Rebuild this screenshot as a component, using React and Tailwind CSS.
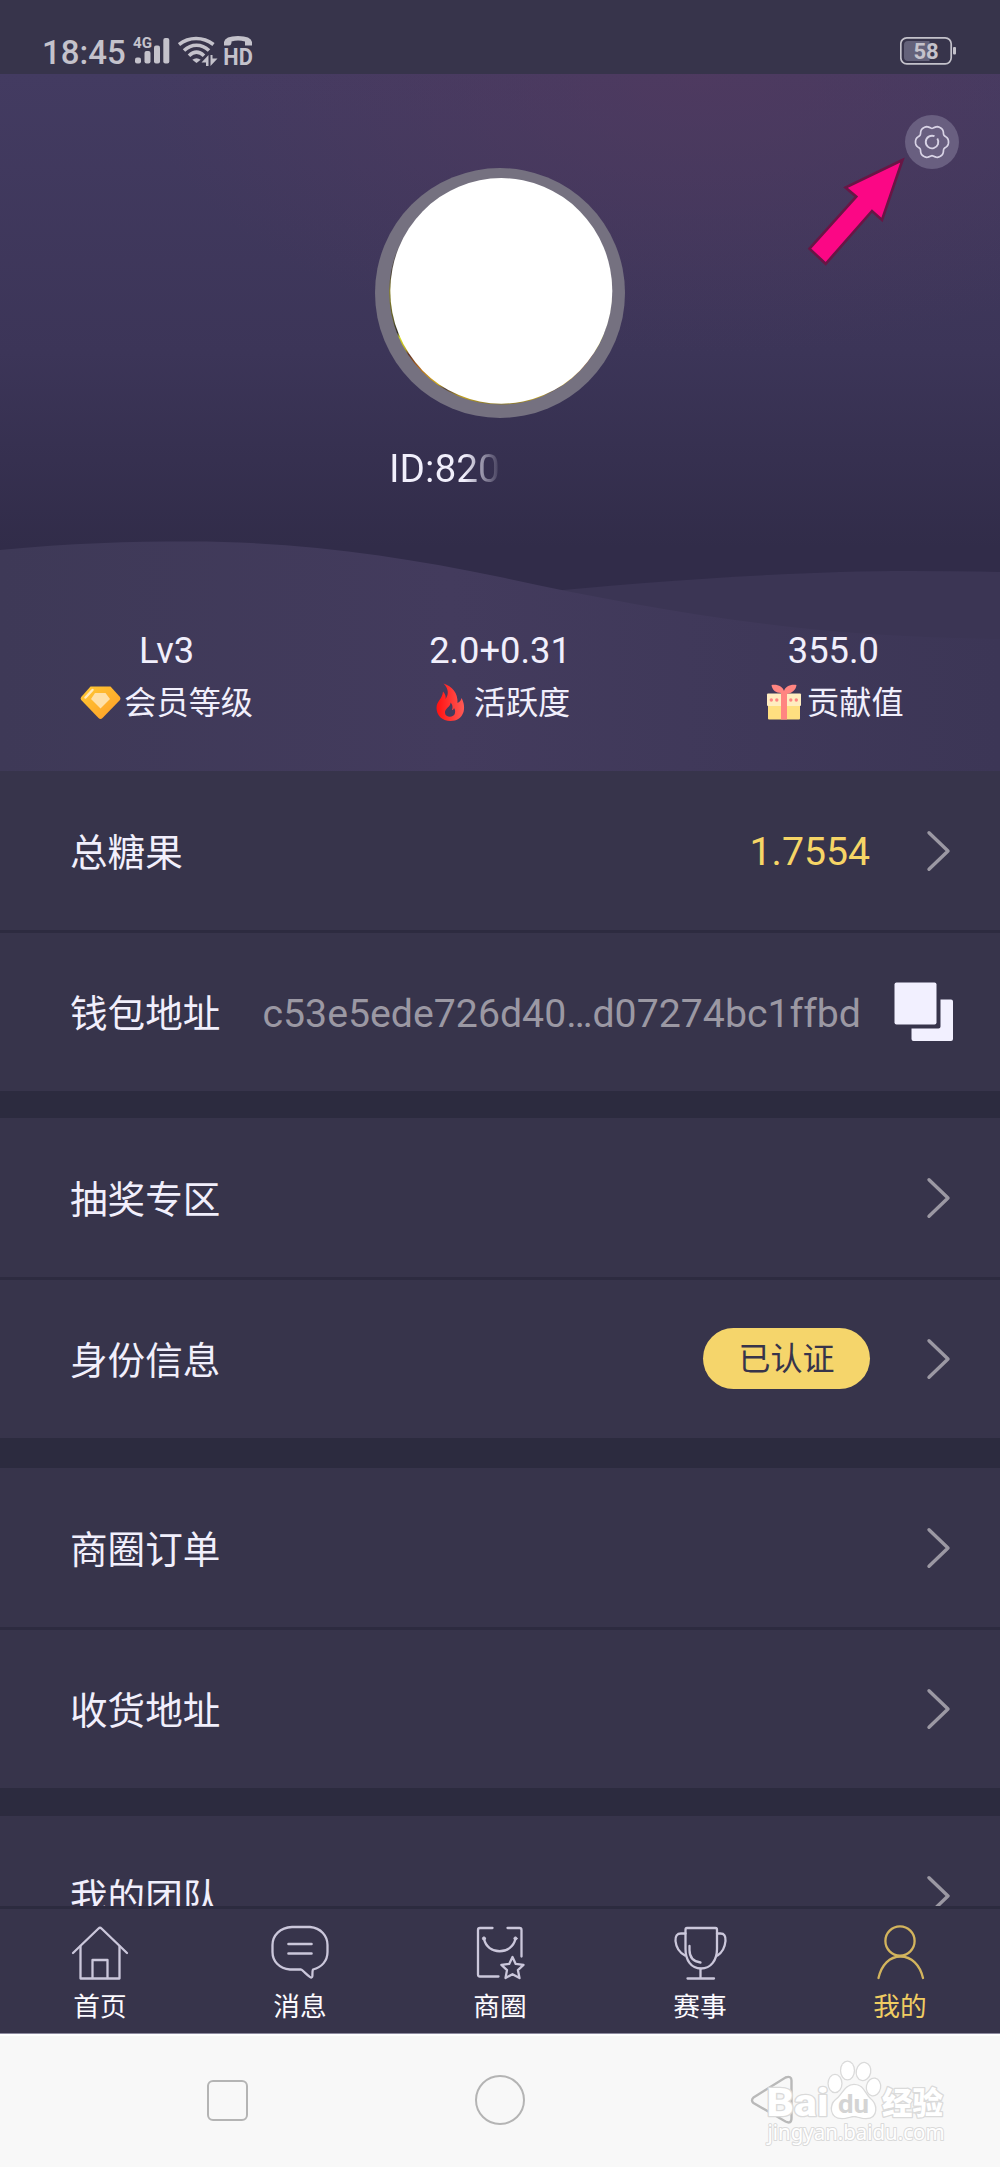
import clsx from "clsx";

const gearPath =
  Array.from({ length: 73 }, (_, i) => {
    const a = (i * 5 * Math.PI) / 180;
    const r = 15.4 + 1.4 * Math.cos(6 * a) - 0.3 * Math.cos(12 * a);
    return `${i === 0 ? "M" : "L"}${(27 + r * Math.cos(a)).toFixed(2)} ${(27 + r * Math.sin(a)).toFixed(2)}`;
  }).join(" ") + "Z";

function StatusBar() {
  return (
    <div className="flex h-[74px] items-start justify-between bg-[#37344b] pt-9 pr-[43px] pl-[42px] text-[#c4c2cb]">
      <div className="flex items-start">
        <span className="w-[91px] pt-px text-[33px] leading-[32px] font-medium">18:45</span>
        <svg className="h-[30px] w-[37px] overflow-visible" viewBox="133 36 37 30" fill="currentColor">
          <text x="133" y="48.3" fontSize="14" fontWeight="700" textLength="19" lengthAdjust="spacingAndGlyphs">4G</text>
          <rect x="135" y="57.5" width="6" height="6" rx="2" />
          <rect x="144.5" y="51" width="6" height="12.5" rx="2" />
          <rect x="154" y="45.5" width="6" height="18" rx="2" />
          <rect x="163.3" y="38" width="6" height="25.5" rx="2" />
        </svg>
        <svg className="ml-2 h-[30px] w-[40px]" viewBox="178 36 40 30" fill="none" stroke="currentColor" strokeWidth="3.6">
          <path d="M179 44.5C189 36.5 203 36.5 213.5 44.5" />
          <path d="M184 50.5C191.500 43.5 201.500 43.500 209 50.5" />
          <path d="M189 55.8C194 51 199 51 204 55.8" />
          <path d="M192.300 59.800Q196.500 56.500 200.700 59.800L196.500 63Z" fill="currentColor" stroke="none" />
          <path d="M208.500 55V66H206V62.500H201.500ZM210.500 66V55H212.500V58.500H217.500Z" fill="currentColor" stroke="none" />
        </svg>
        <svg className="ml-[6px] h-[30px] w-[29px] overflow-visible" viewBox="224 36 29 30" fill="currentColor">
          <path d="M224 45.500V42Q225 36 238 36T252 42V45.500H245V41.500Q238 39.500 231.500 41.500V43Q231 45.500 229 45.500Z" />
          <text x="223.300" y="64.800" fontSize="23.500" fontWeight="700" textLength="29.500" lengthAdjust="spacingAndGlyphs">HD</text>
        </svg>
      </div>
      <svg className="h-[30px] w-[57px]" viewBox="900 36 57 30" fill="currentColor">
        <rect x="900.800" y="37.800" width="50.400" height="26" rx="6" fill="none" stroke="currentColor" strokeWidth="1.700" />
        <path d="M908 41H929.500V61H908Q904 61 904 57V45Q904 41 908 41Z" fill="#64627a" />
        <text x="926" y="59.200" fontSize="22" fontWeight="700" textAnchor="middle">58</text>
        <rect x="953" y="47" width="3" height="7.500" rx="1" />
      </svg>
    </div>
  );
}

function GemIcon() {
  return (
    <svg className="size-[41px]" viewBox="0 0 41 41">
      <defs>
        <linearGradient id="gem" x1="0" y1="0" x2="1" y2="1">
          <stop offset="0" stopColor="#ffc933" />
          <stop offset="1" stopColor="#ff9d28" />
        </linearGradient>
      </defs>
      <path d="M10.500 3.500H30.500L40 14Q41 15.500 40 17L22.500 35Q20.500 36.800 18.500 35L1.200 17Q0 15.500 1.200 14Z" fill="url(#gem)" />
      <path d="M15 10H25.500L30 16L20.500 25.500L11 16Z" fill="#ffe0a8" />
      <path d="M5.500 14.500L12.500 7" stroke="#ffe9bd" strokeWidth="2.500" strokeLinecap="round" />
    </svg>
  );
}

function FlameIcon() {
  return (
    <svg className="size-[41px]" viewBox="0 0 41 41">
      <defs>
        <linearGradient id="flame" x1="0" y1="0" x2="1" y2="0">
          <stop offset="0" stopColor="#ff1010" />
          <stop offset="1" stopColor="#ff5a55" />
        </linearGradient>
      </defs>
      <path
        fillRule="evenodd"
        fill="url(#flame)"
        d="M13.500 .500C22 3 28 10 27.500 20C30 19 31 17 31.500 15C34.500 20 34.500 26 33.500 29C31.500 35 27 38 20.500 38C12 38 6.500 32 6.500 25C6.500 18 12.500 16 13 8.500C15.500 11 16 14 15.500 16C19.500 11 18 5 13.500 .500ZM20.500 19.500C21 24 14.500 25 15 30C15.500 35 24 35 25 30C25.500 27 24.500 26 24 25C23.500 26.500 23 27 22 27C23 24 22.500 21 20.500 19.500Z"
      />
    </svg>
  );
}

function GiftIcon() {
  return (
    <svg className="size-[41px]" viewBox="0 0 41 41">
      <path d="M5 20H37V35.500Q37 36.500 36 36.500H6Q5 36.500 5 35.500Z" fill="#ffdf80" />
      <rect x="4" y="10.500" width="34" height="12.500" rx="1" fill="#ffedc0" />
      <path d="M18 10C13 10 9 7 8.500 2C15 1 20 4 21 8C22 4 27 1 33.500 2C33 7 29 10 24 11V36.500H18Z" fill="#ff8581" />
      <g fill="#ff8581">
        <circle cx="8.300" cy="17" r="1.700" />
        <circle cx="13.800" cy="17" r="1.700" />
        <circle cx="27.800" cy="17" r="1.700" />
        <circle cx="33.300" cy="17" r="1.700" />
      </g>
    </svg>
  );
}

const stats = [
  { value: "Lv3", label: "会员等级", Icon: GemIcon },
  { value: "2.0+0.31", label: "活跃度", Icon: FlameIcon },
  { value: "355.0", label: "贡献值", Icon: GiftIcon },
];

function HeaderBackground() {
  return (
    <svg className="absolute inset-0 h-full w-full" viewBox="0 74 1000 697" preserveAspectRatio="none">
      <defs>
        <linearGradient id="sky" x1="0" y1="0" x2="0" y2="1">
          <stop offset="0" stopColor="#433b61" />
          <stop offset=".4" stopColor="#3c3558" />
          <stop offset=".68" stopColor="#312c49" />
        </linearGradient>
        <radialGradient id="glow" gradientUnits="userSpaceOnUse" cx="700" cy="74" r="560" gradientTransform="translate(0 37) scale(1 .5)">
          <stop offset="0" stopColor="#55395f" stopOpacity=".6" />
          <stop offset="1" stopColor="#55395f" stopOpacity="0" />
        </radialGradient>
        <linearGradient id="hill" x1="0" y1="0" x2="1" y2="0">
          <stop offset="0" stopColor="#3e3957" />
          <stop offset=".45" stopColor="#433b5d" />
          <stop offset="1" stopColor="#3c3656" />
        </linearGradient>
      </defs>
      <rect y="74" width="1000" height="697" fill="url(#sky)" />
      <rect y="74" width="1000" height="697" fill="url(#glow)" />
      <path d="M520 594C660 580 800 571 910 571Q960 571 1000 572V771H520Z" fill="#3b3554" />
      <path
        d="M0 550C70 543 130 541.500 190 541.500C300 541.500 400 556 500 577C620 603 740 625 870 634Q930 638 1000 639V771H0Z"
        fill="url(#hill)"
      />
    </svg>
  );
}

function Avatar() {
  return (
    <svg className="size-[250px] shrink-0" viewBox="0 0 250 250">
      <defs>
        <linearGradient id="rim" gradientUnits="userSpaceOnUse" x1="0" y1="70" x2="0" y2="236">
          <stop offset="0" stopColor="#757180" />
          <stop offset=".22" stopColor="#4a4030" />
          <stop offset=".32" stopColor="#8a8426" />
          <stop offset=".5" stopColor="#5c5a2a" />
          <stop offset=".57" stopColor="#2f2a25" />
          <stop offset=".6" stopColor="#d6dc22" />
          <stop offset=".67" stopColor="#b9ac1d" />
          <stop offset=".7" stopColor="#5e3020" />
          <stop offset=".78" stopColor="#b0661c" />
          <stop offset=".88" stopColor="#d3ae18" />
          <stop offset=".91" stopColor="#4f3b36" />
          <stop offset=".96" stopColor="#c4a41f" />
          <stop offset="1" stopColor="#8c7a30" />
        </linearGradient>
      </defs>
      <circle cx="125" cy="125" r="125" fill="#757180" />
      <ellipse cx="125.500" cy="124" rx="111.300" ry="112.600" fill="url(#rim)" />
      <ellipse cx="126.300" cy="122.900" rx="111" ry="112.800" fill="#fff" />
    </svg>
  );
}

function ProfileHeader() {
  return (
    <header className="relative h-[697px]">
      <HeaderBackground />
      <div className="relative flex h-full flex-col items-center pt-[94px] text-[#f1effc]">
        <Avatar />
        <p className="mt-[31px] w-[222px] bg-linear-to-r from-[#f1effc] from-34% to-transparent to-51% bg-clip-text text-[38.8px] leading-[40px] text-transparent">
          ID:8203
        </p>
        <div className="mt-[142px] grid w-full grid-cols-3">
          {stats.map(({ value, label, Icon }) => (
            <div key={label} className="flex flex-col items-center">
              <span className="text-[36.3px] leading-[40px]">{value}</span>
              <span className="mt-[12px] flex items-center gap-[3px] text-[32.2px] leading-[41px]">
                <Icon />
                {label}
              </span>
            </div>
          ))}
        </div>
      </div>
      <button className="absolute top-[41px] right-[41px] size-[54px] rounded-full bg-[#695f80]">
        <svg viewBox="0 0 54 54" fill="none" stroke="#d8d3e5" strokeWidth="1.700">
          <path d={gearPath} />
          <path d="M32.300 23.500A6.300 6.300 0 1 1 29.500 21.200" strokeWidth="1.900" />
        </svg>
      </button>
      <svg className="absolute top-[81px] left-[805px] h-[114px] w-[103px]" viewBox="805 155 103 114">
        <path
          d="M902.500 160L845.500 187.500L856.300 196.700L809.500 248.700L825.700 263.800L872 211L882 220Z"
          fill="#fb0785"
          stroke="#681645"
          strokeWidth="2.600"
        />
      </svg>
    </header>
  );
}

function Chevron() {
  return (
    <svg className="ml-[55px] h-[42px] w-[26px]" viewBox="0 0 26 42" fill="none" stroke="#9b98a3" strokeWidth="3.400" strokeLinecap="round" strokeLinejoin="round">
      <path d="M4 2.800L23 21L4 39.200" />
    </svg>
  );
}

function Row({ label, divided, children }) {
  return (
    <div
      className={clsx(
        "flex shrink-0 items-center pr-[49px] pl-[70px]",
        divided ? "h-[161px] border-t-3 border-[#2d2b40]" : "h-[159px]"
      )}
    >
      <span className="pt-1 text-[37.6px] leading-[44px] text-[#f1effc]">{label}</span>
      <div className="ml-auto flex items-center">{children}</div>
    </div>
  );
}

function CopyIcon() {
  return (
    <svg className="-mr-[3px] ml-[33px] h-[60px] w-[60px]" viewBox="0 0 60 60" fill="#f2f0ff">
      <rect x="0.500" y="0.500" width="42" height="42" rx="2" />
      <path d="M46.500 17.500H57Q59 17.500 59 19.500V57Q59 59 57 59H19.500Q17.500 59 17.500 57V46.500H44.500Q46.500 46.500 46.500 44.500Z" />
    </svg>
  );
}

const tabs = [
  {
    label: "首页",
    icon: (
      <>
        <path d="M3 29L28.500 4.500Q30 3 31.500 4.500L57 29" />
        <path d="M10.500 22.500V54.500H49.500V22.500" />
        <path d="M22.500 54V36H37.500V54" />
      </>
    ),
  },
  {
    label: "消息",
    icon: (
      <>
        <path d="M22 3H40C51 4 57.500 12 57.500 21V28C57.500 37 51.500 43.500 43 45.500C41.500 49 43.500 53 41.500 53.500C39.500 54 33 46 31 45.500H20C9 44.500 2.500 37 2.500 28V21C2.500 11.500 10 3.500 22 3Z" />
        <path d="M18.500 20H41.500M18.500 29.500H41.500" strokeWidth="2.600" />
      </>
    ),
  },
  {
    label: "商圈",
    icon: (
      <>
        <path d="M22.500 4H10Q8 4 8 6V50.500Q8 52.500 10 52.500H28.500M37.500 4H49.500Q51.500 4 51.500 6V32.500" />
        <path d="M14 14.500C17 31.500 42 31.500 45.500 14.500" />
        <circle cx="14" cy="14.500" r="1.600" fill="currentColor" strokeWidth="1" />
        <circle cx="45.500" cy="14.500" r="1.600" fill="currentColor" strokeWidth="1" />
        <path d="M42.500 33L45.700 39.900L53.500 40.800L47.900 46.100L49.500 54L42.500 50.200L35.500 54L37 46.100L31.400 40.800L39.200 39.900Z" />
      </>
    ),
  },
  {
    label: "赛事",
    icon: (
      <>
        <path d="M17 4H45.500Q47 4 47 6V25C47 36 41 44.500 31 44.500C21 44.500 15.500 36 15.500 25V6Q15.500 4 17 4Z" />
        <path d="M15.500 9.500H11Q5 9.500 5.500 17Q6.500 27 15 31.500M47 9.500H50.500Q56 9.500 55.500 17Q54.500 27 47.500 31.500" />
        <path d="M19.500 22V26Q19.500 37 30.500 38.500M30.500 45V54M17.500 54.500H44" />
      </>
    ),
  },
  {
    label: "我的",
    active: true,
    icon: (
      <>
        <circle cx="30" cy="17" r="14.600" />
        <path d="M8.500 54C11.500 41 19.500 32.500 30.500 32.500S50 41 53 54" />
      </>
    ),
  },
];

function TabBar() {
  return (
    <nav className="grid h-[128px] grid-cols-5 border-t-3 border-b border-t-[#2c2b3f] border-b-[#8e8ba0] bg-[#37344b]">
      {tabs.map((tab) => (
        <a key={tab.label} className={clsx("flex flex-col items-center pt-[15px]", tab.active ? "text-[#f0cd62]" : "text-[#fcfbff]")}>
          <svg
            className={clsx("size-[60px]", tab.active ? "text-[#d3b45d]" : "text-[#cbc7db]")}
            viewBox="0 0 60 60"
            fill="none"
            stroke="currentColor"
            strokeWidth="2.300"
            strokeLinecap="round"
            strokeLinejoin="round"
          >
            {tab.icon}
          </svg>
          <span className="mt-[5px] text-[26.7px] leading-[36px]">{tab.label}</span>
        </a>
      ))}
    </nav>
  );
}

function Watermark() {
  return (
    <svg className="absolute top-[18px] left-[760px] h-[96px] w-[190px]" viewBox="760 2053 190 96">
      <g fill="#fff" stroke="#dadada" strokeWidth="2.600" paintOrder="stroke" strokeLinejoin="round">
        <text x="766.500" y="2115" fontSize="39" fontWeight="800" textLength="62" lengthAdjust="spacingAndGlyphs">Bai</text>
        <ellipse cx="835" cy="2082.500" rx="6.300" ry="8.500" />
        <ellipse cx="847.500" cy="2069.500" rx="6.300" ry="8.800" />
        <ellipse cx="863.500" cy="2070.500" rx="6.600" ry="8.500" transform="rotate(12 863.500 2070.500)" />
        <ellipse cx="873.500" cy="2086" rx="6.500" ry="8.300" transform="rotate(10 873.500 2086)" />
        <path d="M854 2084C863 2084 864 2092 870 2098C877 2103 878 2117 866 2117C860 2117 858 2115 854 2115S848 2117 842 2117C830 2117 830 2104 836 2099C843 2094 845 2084 854 2084Z" />
        <text x="838" y="2111.500" fontSize="25" fontWeight="700" textLength="31" lengthAdjust="spacingAndGlyphs" fill="#d4d4d4" stroke="none">du</text>
        <text x="882" y="2113" fontSize="31" fontWeight="900" textLength="61" lengthAdjust="spacingAndGlyphs" fontFamily="Noto Sans CJK SC">经验</text>
        <text x="767.500" y="2139" fontSize="21" fontFamily="Noto Sans" strokeWidth="2" textLength="177" lengthAdjust="spacingAndGlyphs">jingyan.baidu.com</text>
      </g>
    </svg>
  );
}

function SystemNav() {
  return (
    <div className="relative flex h-[133px] items-center border-t-2 border-white bg-[#f8f8f8] pb-[3px] pl-[207px]">
      <span className="size-[41px] rounded-[6px] border-2 border-[#b4b4b4]" />
      <span className="ml-[227px] size-[50px] rounded-full border-2 border-[#b4b4b4]" />
      <svg className="ml-[225px] h-[50px] w-[44px]" viewBox="750 2075 44 50" fill="none" stroke="#b9b9b9" strokeWidth="2.400">
        <path d="M753.500 2097.500L785.500 2077.500Q791.500 2075.500 791.500 2080.500V2118Q791.500 2124.500 785.500 2121.500L753.500 2103Q750.500 2100.500 753.500 2097.500Z" />
      </svg>
      <Watermark />
    </div>
  );
}

export default function App() {
  return (
    <div className="flex h-[2167px] w-[1000px] flex-col overflow-hidden bg-[#37344b] font-[Roboto,'Noto_Sans_CJK_SC',sans-serif]">
      <StatusBar />
      <ProfileHeader />
      <main className="flex h-[1135px] flex-col overflow-hidden bg-[#37344b]">
        <Row label="总糖果">
          <span className="pt-[3px] text-[39.2px] leading-[44px] text-[#f6d566]">1.7554</span>
          <Chevron />
        </Row>
        <Row label="钱包地址" divided>
          <span className="pt-1 text-[39.25px] leading-[44px] text-[#9b98a3]">c53e5ede726d40…d07274bc1ffbd</span>
          <CopyIcon />
        </Row>
        <div className="h-[27px] shrink-0 bg-[#2c2b3f]" />
        <Row label="抽奖专区">
          <Chevron />
        </Row>
        <Row label="身份信息" divided>
          <span className="mb-px flex h-[61px] w-[167px] items-center justify-center rounded-full bg-[#f5d56b] pt-px text-[32px] leading-none text-[#37344b]">
            已认证
          </span>
          <Chevron />
        </Row>
        <div className="h-[30px] shrink-0 bg-[#2c2b3f]" />
        <Row label="商圈订单">
          <Chevron />
        </Row>
        <Row label="收货地址" divided>
          <Chevron />
        </Row>
        <div className="h-[28px] shrink-0 bg-[#2c2b3f]" />
        <Row label="我的团队">
          <Chevron />
        </Row>
      </main>
      <TabBar />
      <SystemNav />
    </div>
  );
}
